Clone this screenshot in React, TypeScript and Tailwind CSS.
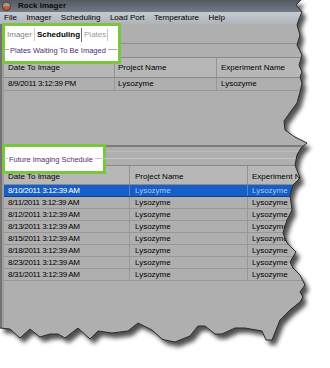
const edge: [number, number][] = [
  [301, 0], [296, 5], [302, 12], [299, 19], [297, 25], [300, 35], [297, 45], [302, 55], [299, 65],
  [302, 72], [300, 77], [302, 83], [300, 92], [297, 103], [291, 111], [284, 121], [285, 130],
  [295, 137], [307, 143], [301, 148], [297, 155], [295, 165], [300, 178], [293, 185], [290, 195],
  [292, 210], [287, 220], [285, 226], [283, 233], [287, 243], [296, 252], [290, 262], [293, 268],
  [300, 275], [305, 285], [300, 292], [303, 297], [300, 302], [290, 310], [280, 320], [276, 330],
  [272, 340], [266, 340], [262, 331], [245, 328], [235, 328], [222, 334], [215, 334], [205, 326],
  [198, 326], [190, 336], [175, 342], [165, 340], [162, 339], [152, 330], [138, 323], [128, 331],
  [112, 333], [98, 331], [90, 339], [78, 328], [65, 338], [58, 334], [50, 334], [40, 337],
  [30, 329], [20, 338], [10, 329], [0, 328],
]

const edgePath = 'M' + edge.map(([x, y]) => `${x},${y}`).join(' L')
const shapePath = 'M0,0 L' + edge.map(([x, y]) => `${x},${y}`).join(' L') + ' Z'

const menu = ['File', 'Imager', 'Scheduling', 'Load Port', 'Temperature', 'Help']

const schedule = [
  '8/10/2011 3:12:39 AM',
  '8/11/2011 3:12:39 AM',
  '8/12/2011 3:12:39 AM',
  '8/13/2011 3:12:39 AM',
  '8/15/2011 3:12:39 AM',
  '8/18/2011 3:12:39 AM',
  '8/23/2011 3:12:39 AM',
  '8/31/2011 3:12:39 AM',
]

function AppIcon() {
  return (
    <svg width="9" height="9" viewBox="0 0 9 9">
      <circle cx="4.5" cy="4.5" r="4" fill="#d2562c" stroke="#3a2a22" strokeWidth="0.8" />
      <path d="M1 4.2 A3.5 3.5 0 0 1 8 4.2 Z" fill="#9a9a9a" />
    </svg>
  )
}

export default function App() {
  return (
    <div className="relative w-[330px] h-[368px] bg-white overflow-hidden font-['Liberation_Sans',Arial,sans-serif] text-black">
      {/* drop shadow under the torn edge */}
      <svg className="absolute left-0 top-0" width="330" height="368">
        <defs>
          <filter id="tearBlur" x="-10%" y="-10%" width="120%" height="120%">
            <feGaussianBlur stdDeviation="2.2" />
          </filter>
          <clipPath id="tear" clipPathUnits="userSpaceOnUse">
            <path d={shapePath} />
          </clipPath>
        </defs>
        <path d={shapePath} transform="translate(4 5)" fill="#3c3c3c" opacity="0.9" filter="url(#tearBlur)" />
      </svg>

      {/* window */}
      <div className="relative flex flex-col w-[330px] h-[368px] bg-[#afafaf] [clip-path:url(#tear)]">
        {/* title bar */}
        <div className="h-[12px] flex items-center pl-[2px] bg-gradient-to-b from-[#55595f] to-[#717a87]">
          <AppIcon />
          <span className="ml-[7px] text-[8px] font-bold leading-none text-[#0c0c0c]">Rock Imager</span>
        </div>

        {/* menu bar */}
        <div className="h-[12px] flex items-center pl-[4px] gap-[9.5px] bg-gradient-to-b from-[#c6cad1] to-[#afb3ba] text-[8px] leading-none">
          {menu.map((m) => (
            <span key={m}>{m}</span>
          ))}
        </div>

        {/* body */}
        <div className="flex flex-1">
          <div className="w-[2px] bg-[#737373]" />
          <div className="w-[2px] bg-[#9e9e9e]" />
          <div className="flex-1 flex flex-col text-[8px] leading-none">
            {/* tabs */}
            <div className="h-[20px] flex items-center pt-[2px] border-b border-[#8e8e8e]">
              <span className="relative z-[2] ml-[3px] text-[#808080]">Imager</span>
              <div className="relative z-[2] ml-[2px] w-px h-[13px] bg-[#cdcdcd]" />
              <span className="relative z-[2] ml-[2px] font-bold">Scheduling</span>
              <div className="relative z-[2] ml-px w-px h-[14px] bg-[#6e6e6e]" />
              <span className="relative z-[2] ml-[2px] text-[#9a9a9a]">Plates</span>
              <div className="relative z-[2] ml-px w-px h-[12px] bg-[#c4c4c4]" />
            </div>

            {/* group: plates waiting */}
            <div className="h-[14px] flex items-center border-b border-[#8a8a8a]">
              <div className="relative z-[2] self-end w-[5px] h-[8px] border-t border-l border-[#a8a8a8]" />
              <span className="relative z-[2] ml-px text-[7.5px] text-[#4e2f70]">Plates Waiting To Be Imaged</span>
              <div className="relative z-[2] ml-[2px] w-[9px] h-px mb-[3px] bg-[#a8a8a8]" />
            </div>

            {/* table 1 header */}
            <div className="h-[20px] flex bg-[#b7b7b7] border-b border-[#8a8a8a]">
              <div className="w-[111px] flex items-center pl-[4px] border-r border-[#939393]">Date To Image</div>
              <div className="w-[102px] flex items-center pl-[3px] border-r border-[#939393]">Project Name</div>
              <div className="flex-1 flex items-center pl-[4px] whitespace-nowrap">Experiment Name</div>
            </div>
            <div className="h-[13px] flex border-b border-[#979797]">
              <div className="w-[111px] flex items-center pl-[4px] border-r border-[#979797] tracking-[-0.3px]">8/9/2011 3:12:39 PM</div>
              <div className="w-[102px] flex items-center pl-[3px] border-r border-[#979797]">Lysozyme</div>
              <div className="flex-1 flex items-center pl-[4px]">Lysozyme</div>
            </div>
            <div className="h-[54px]" />

            {/* splitter */}
            <div className="h-[2px] bg-[#7c7c7c]" />
            <div className="h-[4px]" />
            <div className="h-px bg-[#bdbdbd]" />

            {/* group: future schedule */}
            <div className="h-[13px] flex">
              <div className="relative z-[2] w-[4px] h-px mt-[6px] bg-[#c6c6c6]" />
              <span className="relative z-[2] ml-px mt-[4px] text-[7.5px] text-[#4e2f70]">Future Imaging Schedule</span>
              <div className="relative z-[2] flex-1 ml-[2px] h-px mt-[6px] bg-[#c6c6c6]" />
            </div>

            {/* table 2 header */}
            <div className="h-[20px] flex bg-[#b7b7b7] border-t border-b border-[#8a8a8a]">
              <div className="w-[126px] flex items-center pt-[3px] pl-[4px] border-r border-[#939393]">Date To Image</div>
              <div className="w-[118px] flex items-center pt-[3px] pl-[5px] border-r border-[#939393]">Project Name</div>
              <div className="flex-1 flex items-center pt-[3px] pl-[4px] whitespace-nowrap">Experiment Name</div>
            </div>
            {schedule.map((d, i) => {
              const sel = i === 0
              return (
                <div
                  key={d}
                  className={
                    sel
                      ? 'h-[12px] flex bg-[#175fc8] border-b border-[#0e3f8a]'
                      : 'h-[12px] flex border-b border-[#979797]'
                  }
                >
                  <div
                    className={
                      sel
                        ? 'w-[126px] flex items-center pl-[4px] tracking-[-0.3px] text-white border-r border-[#5a86c9]'
                        : 'w-[126px] flex items-center pl-[4px] tracking-[-0.3px] border-r border-[#979797]'
                    }
                  >
                    {d}
                  </div>
                  <div
                    className={
                      sel
                        ? 'w-[118px] flex items-center pl-[5px] text-[#a9c6ef] border-r border-[#5a86c9]'
                        : 'w-[118px] flex items-center pl-[5px] border-r border-[#979797]'
                    }
                  >
                    Lysozyme
                  </div>
                  <div className={sel ? 'flex-1 flex items-center pl-[4px] text-[#a9c6ef]' : 'flex-1 flex items-center pl-[4px]'}>
                    Lysozyme
                  </div>
                </div>
              )
            })}
            <div className="flex-1" />
          </div>
        </div>

        {/* green annotation boxes */}
        <div className="absolute z-[1] left-[2px] top-[23px] w-[119px] h-[41px] border-[3px] border-[#7cc63f] bg-white" />
        <div className="absolute z-[1] left-[2px] top-[144px] w-[104px] h-[30px] border-[3px] border-[#7cc63f] bg-white" />
      </div>

      {/* torn edge outline */}
      <svg className="absolute left-0 top-0 pointer-events-none" width="330" height="368">
        <path d={edgePath} fill="none" stroke="#2c2c2c" strokeWidth="1" />
      </svg>
    </div>
  )
}
